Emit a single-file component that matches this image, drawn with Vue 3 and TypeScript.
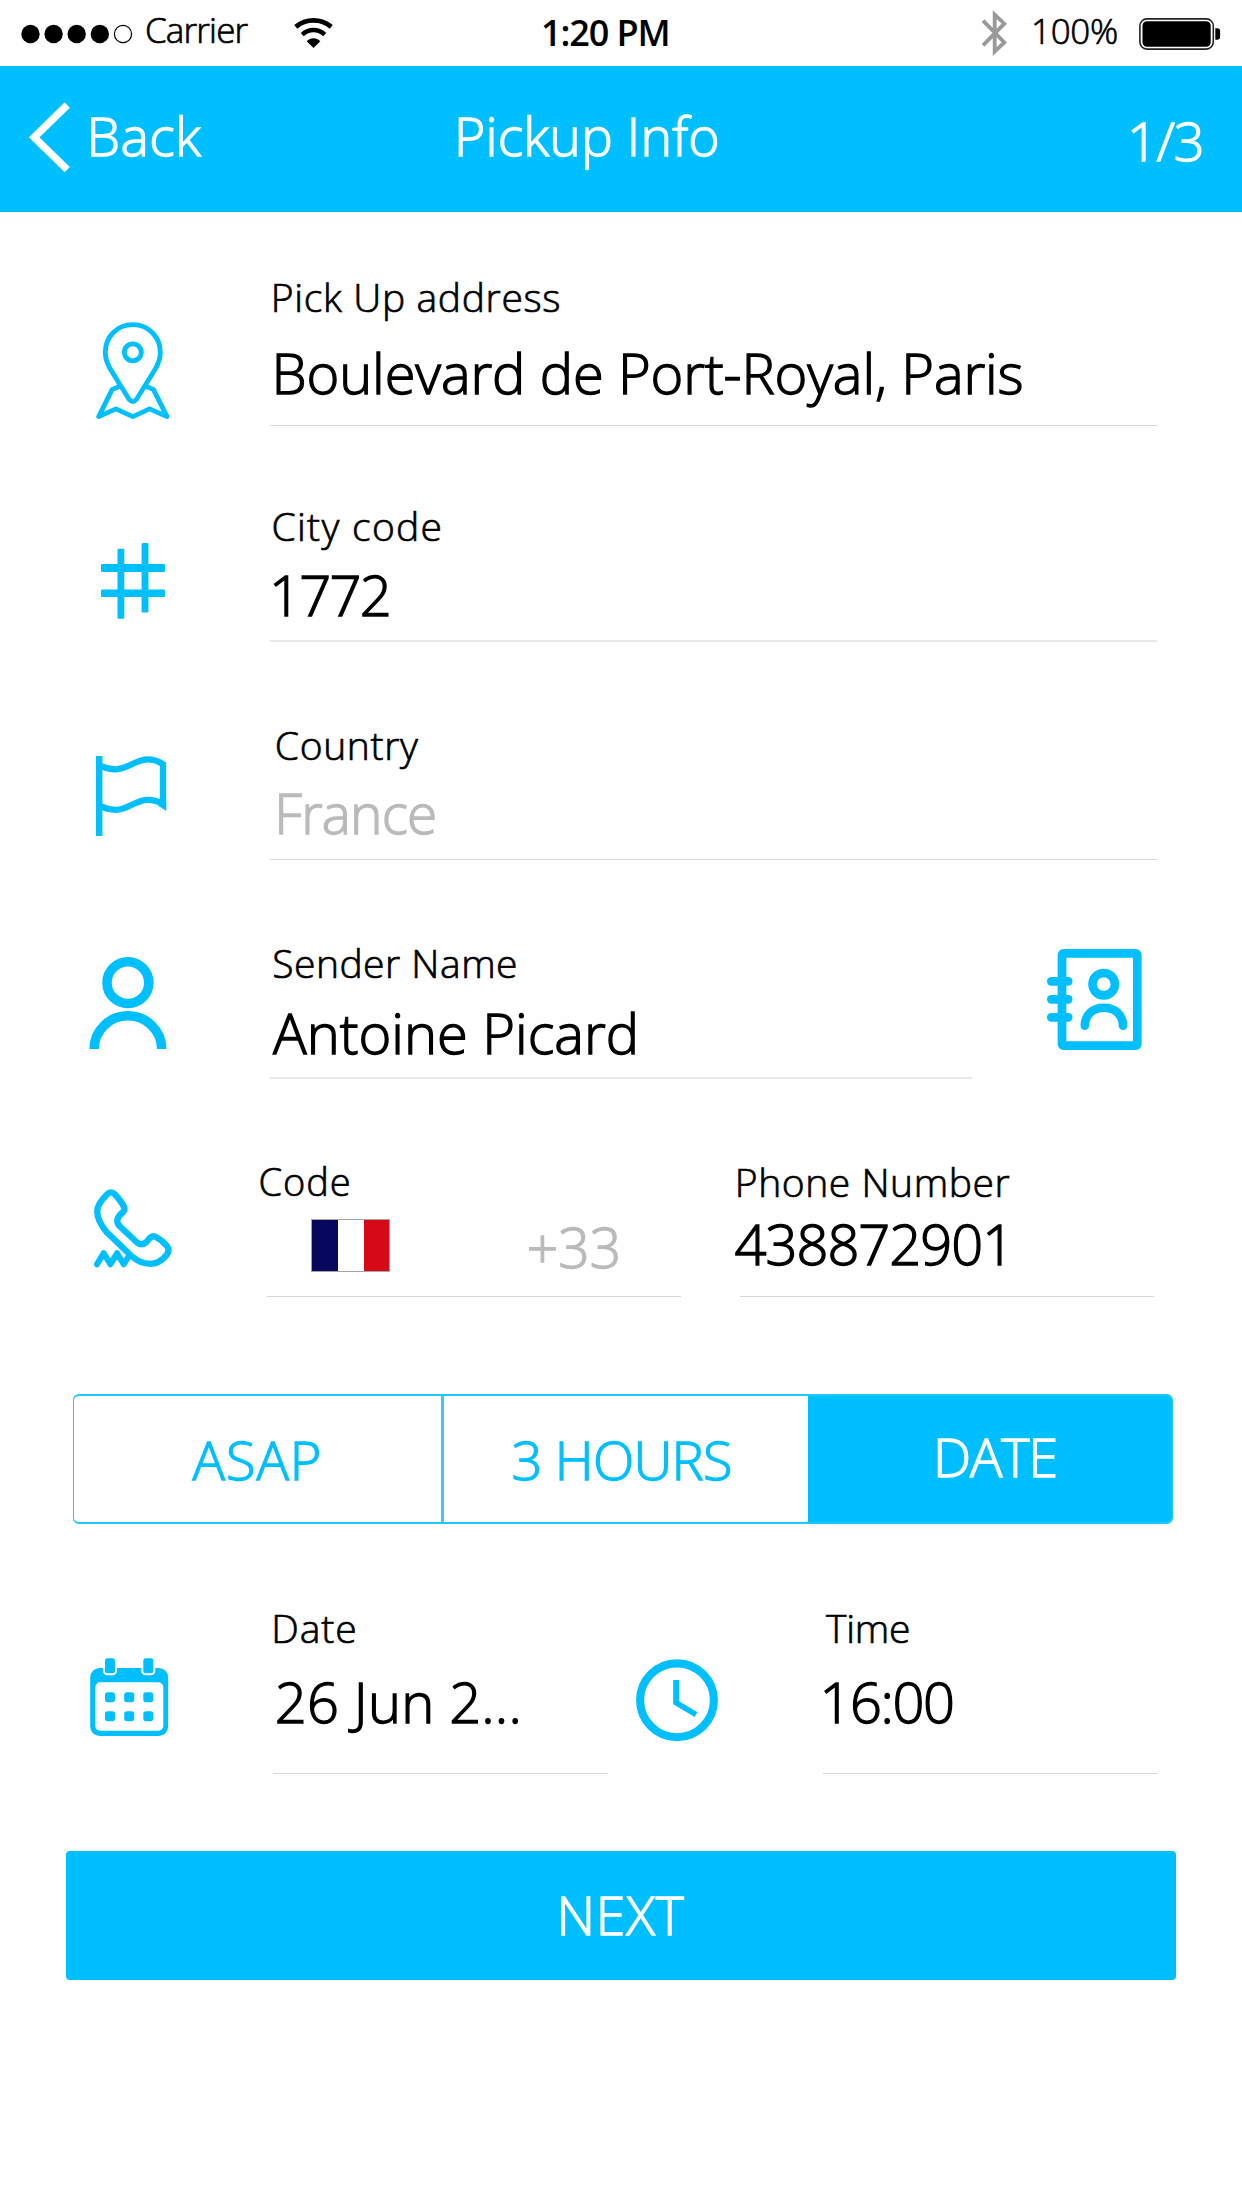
<script setup lang="ts">
import { ref } from 'vue'

type Speed = 'asap' | 'hours' | 'date'

const speeds: { id: Speed; label: string }[] = [
  { id: 'asap', label: 'ASAP' },
  { id: 'hours', label: '3 HOURS' },
  { id: 'date', label: 'DATE' },
]
const selected = ref<Speed>('date')
const signalDots = [10.5, 33.6, 56.7, 79.8]
const calendarColumns = [15, 34.2, 53.3]
</script>

<template>
  <div class="page">
    <div class="status">
      <svg class="signal" width="114" height="20" viewBox="0 0 114 20">
        <circle v-for="x in signalDots" :key="x" :cx="x" cy="10" r="9.2" />
        <circle cx="103" cy="10" r="8.6" fill="none" stroke="#000" stroke-width="1.2" />
      </svg>
      <span class="carrier">Carrier</span>
      <svg class="wifi" width="40" height="32" viewBox="0 0 40 32">
        <path d="M1.8 9.8C12 1.2 27 1.2 37.2 9.8" fill="none" stroke="#000" stroke-width="4.8" />
        <path d="M8.2 17.6C15 11.6 24 11.6 30.8 17.6" fill="none" stroke="#000" stroke-width="4.5" />
        <path d="M12.7 24.2C16.5 20.3 22.5 20.3 26.3 24.2L19.5 31z" />
      </svg>
      <span class="clock">1:20 PM</span>
      <svg class="bluetooth" width="26" height="46" viewBox="0 0 26 46">
        <path d="M2 10.7L23.3 32.5 13.7 41.6V4.6L23.3 13.7 2 35.3" fill="none" stroke="#999" stroke-width="3.8" />
      </svg>
      <span class="percent">100%</span>
      <svg class="battery" width="82" height="32" viewBox="0 0 82 32">
        <rect x=".9" y=".9" width="73.4" height="30.2" rx="7" fill="none" stroke="#222" stroke-width="1.6" />
        <rect x="3.5" y="3.2" width="68.2" height="25.6" rx="4.5" />
        <path d="M76.3 10.3h1.8q3 0 3 3v5.4q0 3-3 3h-1.8z" />
      </svg>
    </div>

    <header class="header">
      <button class="back">
        <svg width="43" height="71" viewBox="0 0 43 71">
          <path d="M39.3 3L6.2 35.3 39.3 67.7" fill="none" stroke="#fff" stroke-width="7.4" />
        </svg>
        <span>Back</span>
      </button>
      <h1>Pickup Info</h1>
      <span class="step">1/3</span>
    </header>

    <main class="form">
      <section class="row row-address">
        <div class="icon">
          <svg width="74" height="98" viewBox="0 0 74 98" fill="none" stroke="#00bfff" stroke-width="4.8">
            <path d="M36.8 2.7C21 2.7 9.3 15 9.3 30.5c0 7 1.7 10.5 4.7 16L33 77.2q3.8 4.6 7.6 0L59.6 46.5c3-5.5 4.7-9 4.7-16C64.3 15 52.5 2.7 36.8 2.7z" />
            <circle cx="36.8" cy="30.3" r="8.5" />
            <path d="M24 64.2L16.2 67.4 2.7 94.6 19.9 86.9 36.8 94.6 53.6 86.9 71 94.6 57.4 67.4 49.6 64.2" stroke-linejoin="round" />
          </svg>
        </div>
        <label class="field">
          <span class="label">Pick Up address</span>
          <span class="value">Boulevard de Port-Royal, Paris</span>
        </label>
      </section>

      <section class="row row-city">
        <div class="icon">
          <svg width="64" height="76" viewBox="0 0 64 76" fill="#00bfff">
            <rect x="16.5" y="5.7" width="6.8" height="70" rx="1.2" />
            <rect x="40.6" y="0" width="6.8" height="69.5" rx="1.2" />
            <rect x="0" y="21" width="64" height="8" rx="1.2" />
            <rect x="0" y="46.5" width="64" height="7.6" rx="1.2" />
          </svg>
        </div>
        <label class="field">
          <span class="label">City code</span>
          <span class="value">1772</span>
        </label>
      </section>

      <section class="row row-country">
        <div class="icon">
          <svg width="71" height="80" viewBox="0 0 71 80">
            <path d="M0 0h6.4v80H0z" fill="#00bfff" />
            <path d="M5 10C10 12.5 15 13.4 20 13.3 32 13 40 3.3 51.7 3.3 58 3.3 63 5.3 67 8.2V48C63 45.5 58 43.8 51.7 43.8 40 43.8 32 53.6 20 53.8 15 53.9 10 52.8 5 50.3" fill="none" stroke="#00bfff" stroke-width="6.3" />
            <path d="M66 43.5h4.2V55L62 49.5z" fill="#00bfff" />
          </svg>
        </div>
        <label class="field">
          <span class="label">Country</span>
          <span class="value muted">France</span>
        </label>
      </section>

      <section class="row row-sender">
        <div class="icon">
          <svg width="78" height="92" viewBox="0 0 78 92" fill="none" stroke="#00bfff" stroke-width="9.5">
            <circle cx="38.9" cy="25.7" r="20.9" />
            <path d="M5.1 92A33.8 33.2 0 0 1 72.7 92" />
          </svg>
        </div>
        <label class="field">
          <span class="label">Sender Name</span>
          <span class="value">Antoine Picard</span>
        </label>
        <svg class="contacts" width="95" height="101" viewBox="0 0 95 101">
          <rect x="15" y="4.4" width="75.3" height="92.2" rx="1.5" fill="none" stroke="#00bfff" stroke-width="8.7" />
          <g fill="#00bfff">
            <rect x="0" y="28" width="25.5" height="8.8" rx="4.2" />
            <rect x="0" y="46" width="25.5" height="8.8" rx="4.2" />
            <rect x="0" y="64" width="25.5" height="8.8" rx="4.2" />
          </g>
          <g fill="none" stroke="#00bfff" stroke-width="8.6">
            <circle cx="56.7" cy="35.2" r="11.2" />
            <path d="M37.8 76.7C38 65.5 46 58.8 56.9 58.8S75.8 65.5 76 76.7" stroke-linecap="round" />
          </g>
        </svg>
      </section>

      <section class="row row-phone">
        <div class="icon">
          <svg width="79" height="79" viewBox="0 0 79 79" fill="none" stroke="#00bfff" stroke-linejoin="round">
            <path d="M13 5.5Q17 1.2 21 5.5 27.5 12.5 30 18 31.4 21 28.5 23.5 19.5 31 26 37.5L42.5 53Q47.5 57.3 52.5 53L56 48.8Q58.5 46 62 48 68.5 51.5 73 57 76.2 61 73 65.5 66 74.8 56.5 74.8 46 74.8 37.5 67L12.5 43Q3.3 32 3.2 22 3.4 15 13 5.5z" stroke-width="6.3" />
            <path d="M3 75.3L9.6 64.2 16.5 75.3 23 64.2 29.7 75.3 35.5 66" stroke-width="6" stroke-linecap="round" />
          </svg>
        </div>
        <label class="field code">
          <span class="label">Code</span>
          <span class="dial">
            <svg width="79" height="53" viewBox="0 0 79 53">
              <path d="M0 0h27v53H0z" fill="#07085c" />
              <path d="M27 0h26v53H27z" fill="#fff" />
              <path d="M53 0h26v53H53z" fill="#d60918" />
              <rect x=".5" y=".5" width="78" height="52" fill="none" stroke="#a5a5a5" />
            </svg>
            <span class="value muted">+33</span>
          </span>
        </label>
        <label class="field number">
          <span class="label">Phone Number</span>
          <span class="value">438872901</span>
        </label>
      </section>

      <nav class="speeds">
        <button
          v-for="s in speeds"
          :key="s.id"
          :class="[s.id, { active: s.id === selected }]"
          @click="selected = s.id"
        >{{ s.label }}</button>
      </nav>

      <section class="row row-when">
        <div class="icon">
          <svg width="79" height="79" viewBox="0 0 79 79">
            <rect x=".2" y="10" width="78" height="68" rx="9.5" fill="#00bfff" />
            <rect x="5.3" y="24.3" width="68" height="48.4" rx="5" fill="#fff" />
            <g fill="#00bfff" stroke="#fff" stroke-width="4" paint-order="stroke">
              <rect x="15" y=".3" width="10" height="15" rx="2.4" />
              <rect x="53.3" y=".3" width="10" height="15" rx="2.4" />
            </g>
            <g v-for="x in calendarColumns" :key="x" fill="#00bfff">
              <rect :x="x" y="34.2" width="10" height="10" rx="2.6" />
              <rect :x="x" y="53.2" width="10" height="10" rx="2.6" />
            </g>
          </svg>
        </div>
        <label class="field date">
          <span class="label">Date</span>
          <span class="value">26 Jun 2...</span>
        </label>
        <svg class="time-icon" width="82" height="83" viewBox="0 0 82 83">
          <circle cx="41" cy="41.3" r="36.9" fill="none" stroke="#00bfff" stroke-width="8.1" />
          <path d="M37.2 21h5.9v21.3l18.2 10.9-2.7 4.8-21.4-12.7z" fill="#00bfff" />
        </svg>
        <label class="field time">
          <span class="label">Time</span>
          <span class="value">16:00</span>
        </label>
      </section>

      <button class="next">NEXT</button>
    </main>
  </div>
</template>

<style>
body {
  margin: 0;
  background: #fefefe;
}
</style>

<style scoped>
.page {
  width: 1242px;
  height: 2208px;
  overflow: hidden;
  background: #fefefe;
  color: #000;
  font-family: "Open Sans", "Noto Sans", sans-serif;
  font-weight: 300;
  -webkit-text-stroke: 1.3px currentColor;
}
svg {
  display: block;
  flex: none;
  overflow: visible;
}
button {
  margin: 0;
  padding: 0;
  border: 0;
  background: none;
  color: inherit;
  font: inherit;
}
span, h1, button {
  white-space: nowrap;
}

/* Status bar */
.status {
  display: flex;
  align-items: flex-start;
  height: 66px;
  font-size: 35px;
  line-height: 40px;
  -webkit-text-stroke-width: 0.7px;
}
.signal {
  margin: 24px 0 0 20px;
}
.carrier {
  width: 140px;
  margin: 10px 0 0 11px;
  letter-spacing: -0.85px;
}
.wifi {
  margin: 17px 0 0 9px;
}
.clock {
  width: 150px;
  margin: 13px 0 0 207px;
  font-size: 36px;
  font-weight: 600;
  letter-spacing: -1.1px;
  -webkit-text-stroke: 0;
}
.bluetooth {
  margin: 10px 0 0 290px;
}
.percent {
  width: 100px;
  margin: 11px 0 0 24px;
  letter-spacing: -0.3px;
}
.battery {
  margin: 18px 0 0 8px;
}

/* Title bar */
.header {
  display: flex;
  align-items: flex-start;
  height: 146px;
  background: #00bfff;
  color: #fff;
  font-size: 53.5px;
  line-height: 60px;
}
.back {
  display: flex;
  align-items: flex-start;
  width: 454px;
  text-align: left;
}
.back svg {
  margin: 36px 0 0 28px;
}
.back span {
  margin: 40px 0 0 15.5px;
  letter-spacing: 0.4px;
}
.header h1 {
  width: 673px;
  margin: 40px 0 0;
  font-size: inherit;
  font-weight: inherit;
  letter-spacing: 0.12px;
}
.step {
  margin-top: 44px;
  font-size: 54px;
  letter-spacing: -1.2px;
}

/* Form rows */
.row {
  display: flex;
  align-items: stretch;
  box-sizing: border-box;
}
.icon {
  flex: none;
  box-sizing: border-box;
  width: 270px;
}
.field {
  display: flex;
  flex-direction: column;
  align-items: flex-start;
  box-sizing: border-box;
  width: 887px;
  border-bottom: 1px solid #d6d6d6;
}
.label {
  font-size: 39px;
  line-height: 40px;
  -webkit-text-stroke-width: 0.7px;
}
.value {
  font-size: 56px;
  line-height: 60px;
}
.muted {
  color: #bababa;
  font-size: 55px;
}

.row-address { height: 214px; }
.row-address .icon { padding: 110px 0 0 96px; }
.row-address .field { padding-top: 65px; }
.row-address .label { margin-left: 0.8px; letter-spacing: 0.65px; }
.row-address .value { margin: 25px 0 0 1.5px; letter-spacing: -0.13px; }

.row-city { height: 216px; }
.row-city .icon { padding: 117px 0 0 101px; }
.row-city .field { padding-top: 80px; border-bottom: 2px solid #e8e8e8; }
.row-city .label { margin-left: 1.5px; letter-spacing: 1.3px; }
.row-city .value { margin: 18px 0 0 -1px; letter-spacing: -1.7px; }

.row-country { height: 218px; }
.row-country .icon { padding: 114px 0 0 96px; }
.row-country .field { padding-top: 83px; }
.row-country .label { margin-left: 4.8px; letter-spacing: 0.65px; }
.row-country .value { margin: 18px 0 0 4.3px; letter-spacing: -0.8px; }

.row-sender { height: 219px; }
.row-sender .icon { padding: 97px 0 0 89px; }
.row-sender .field { width: 702px; padding-top: 83px; border-bottom: 2px solid #e8e8e8; }
.row-sender .label { margin-left: 2.2px; letter-spacing: 0.5px; }
.row-sender .value { margin: 19px 0 0 3px; letter-spacing: 0px; }
.contacts { margin: 89px 0 0 75px; }

.row-phone { height: 218px; }
.row-phone .icon { width: 267px; padding: 110px 0 0 94px; }
.field.code { width: 414px; padding-top: 82px; }
.code .label { margin-left: -8.5px; font-size: 38px; letter-spacing: 0.95px; }
.dial { display: flex; align-items: flex-start; margin: 14px 0 0 44px; }
.dial svg { margin-top: 4px; }
.dial .value { margin: 2px 0 0 136.8px; letter-spacing: 0.1px; }
.field.number { width: 414px; margin-left: 59px; padding-top: 83px; }
.number .label { margin-left: -5.2px; letter-spacing: 0.55px; }
.number .value { margin: 11px 0 0 -5.5px; letter-spacing: -1px; }

/* Delivery speed switch */
.speeds {
  display: flex;
  box-sizing: border-box;
  width: 1100px;
  height: 130px;
  margin: 97px 0 0 73px;
  overflow: hidden;
  border: 2px solid #1fc7ff;
  border-width: 2px 1px;
  border-radius: 6px;
}
.speeds button {
  display: flex;
  align-items: flex-start;
  color: #00bfff;
  font-size: 54px;
  line-height: 60px;
}
.speeds .asap {
  box-sizing: border-box;
  width: 370px;
  padding: 33px 0 0 118.5px;
  border-right: 3px solid #36caff;
  letter-spacing: 1px;
}
.speeds .hours {
  box-sizing: border-box;
  width: 365px;
  padding: 33px 0 0 67.5px;
  letter-spacing: -0.75px;
}
.speeds .date {
  flex: 1;
  padding: 30px 0 0 125px;
  letter-spacing: -1.2px;
}
.speeds button.active {
  margin: -2px -1px;
  padding-top: 32px;
  background: #00bfff;
  color: #fff;
}

.row-when { height: 250px; }
.row-when .icon { width: 273px; padding: 134px 0 0 90px; }
.row-when .field { padding-top: 84px; }
.field.date { width: 335px; }
.date .label { margin-left: -1.7px; letter-spacing: 0.9px; }
.date .value { margin: 23px 0 0 1.8px; letter-spacing: 0.2px; }
.time-icon { margin: 135px 0 0 28px; }
.field.time { width: 334px; margin-left: 105px; }
.time .label { margin-left: 3px; letter-spacing: -0.2px; }
.time .value { margin: 23px 0 0 -3.6px; letter-spacing: -1.4px; }

.next {
  display: block;
  width: 1110px;
  height: 129px;
  margin: 77px 0 0 66px;
  padding: 0 1px 2px 0;
  border-radius: 4px;
  background: #00bfff;
  color: #fff;
  font-size: 53.5px;
  line-height: 60px;
  letter-spacing: 0.8px;
}
</style>
